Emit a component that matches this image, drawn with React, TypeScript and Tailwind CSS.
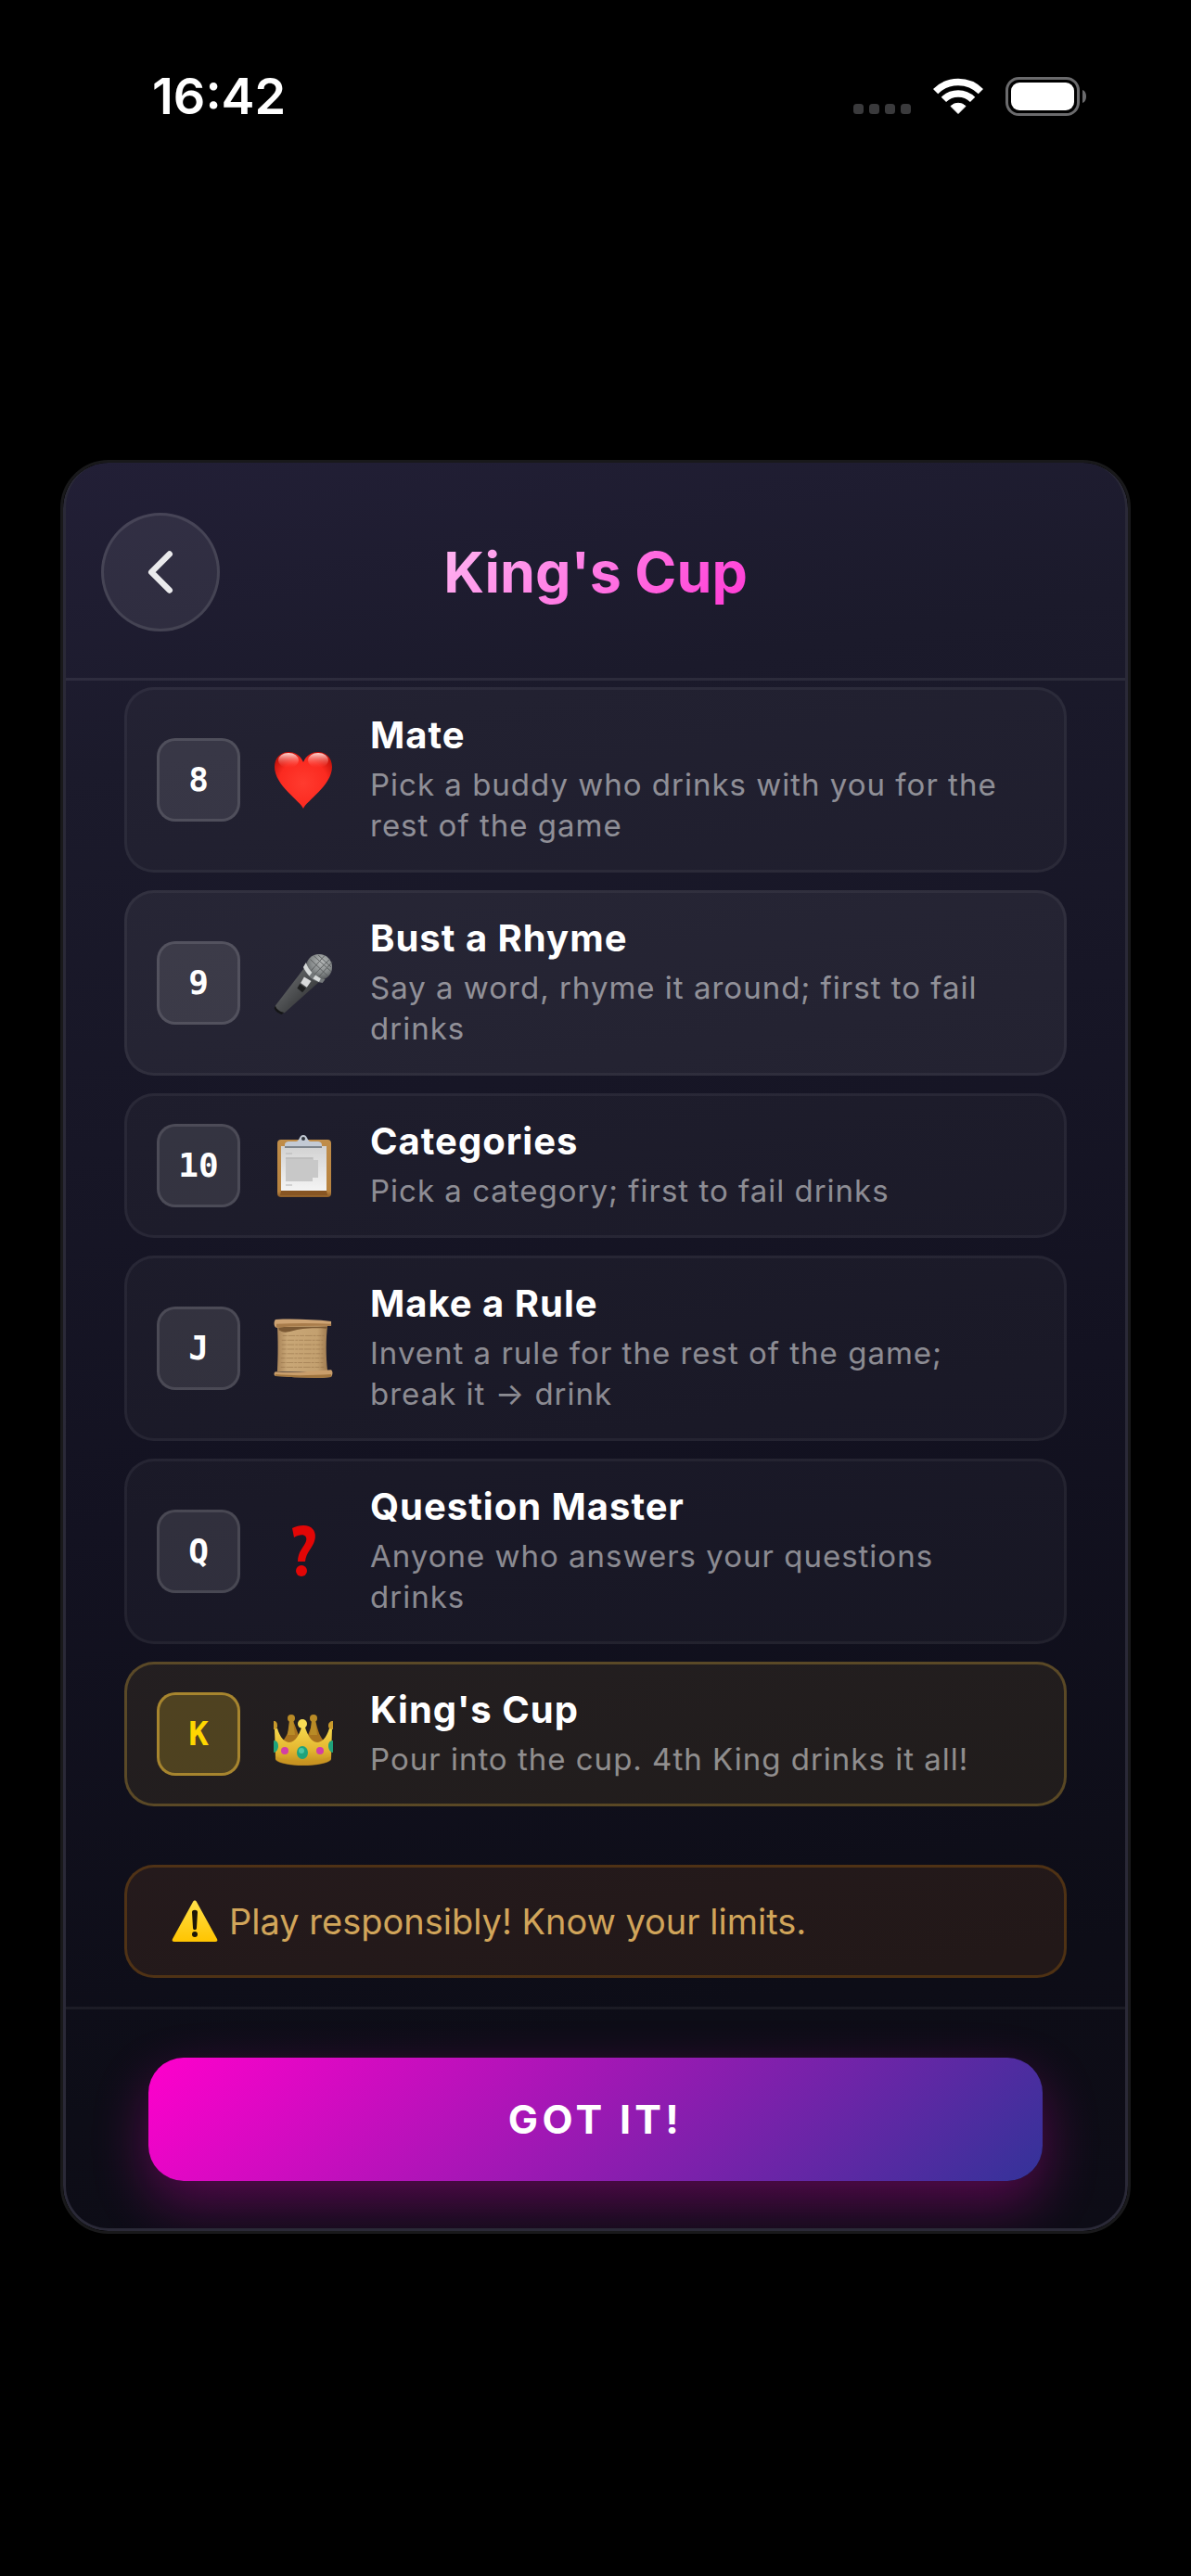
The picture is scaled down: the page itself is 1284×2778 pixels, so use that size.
import { ChevronLeft } from "lucide-react";
import clsx from "clsx";
import type { ReactNode } from "react";

type Rule = {
  card: string;
  icon: ReactNode;
  title: string;
  text: string;
  active?: boolean;
  king?: boolean;
};

function HeartIcon() {
  return (
    <svg viewBox="0 0 64 72" className="h-[72px] w-16" aria-hidden="true">
      <defs>
        <radialGradient id="heart" cx="50%" cy="55%" r="60%">
          <stop offset="0" stopColor="#ff3b2f" />
          <stop offset="0.7" stopColor="#fb2a20" />
          <stop offset="1" stopColor="#c8140c" />
        </radialGradient>
        <linearGradient id="heartShine" x1="0" y1="0" x2="0" y2="1">
          <stop offset="0" stopColor="#ffd9d4" />
          <stop offset="1" stopColor="#ff5146" stopOpacity="0" />
        </linearGradient>
      </defs>
      <path
        d="M32 67C29 59 1 42 1 22 1 12 8 6 16 6c8 0 13 4 16 11C35 10 40 6 48 6c8 0 15 6 15 16 0 20-28 37-31 45Z"
        fill="url(#heart)"
      />
      <ellipse cx="16" cy="15" rx="11" ry="8" fill="url(#heartShine)" />
      <ellipse cx="48" cy="15" rx="11" ry="8" fill="url(#heartShine)" />
    </svg>
  );
}

function MicIcon() {
  return (
    <svg viewBox="0 0 68 72" className="h-[72px] w-16" aria-hidden="true">
      <defs>
        <linearGradient id="micBody" x1="0" y1="0" x2="1" y2="1">
          <stop offset="0" stopColor="#77797b" />
          <stop offset="0.5" stopColor="#4c4e50" />
          <stop offset="1" stopColor="#202122" />
        </linearGradient>
        <radialGradient id="micHead" cx="60%" cy="30%" r="70%">
          <stop offset="0" stopColor="#b4b7b7" />
          <stop offset="0.6" stopColor="#85898a" />
          <stop offset="1" stopColor="#505355" />
        </radialGradient>
      </defs>
      <path d="M2 62 35 19c3 9 9 14 17 16L14 69c-3 3-6 2-9-1s-5-4-3-6Z" fill="url(#micBody)" />
      <path d="M2 62c1 4 5 7 10 8l-3 2c-4-1-9-5-8-8Z" fill="#141516" />
      <circle cx="52" cy="18" r="15" fill="url(#micHead)" />
      <path
        d="m42 9 20 19M46 5l20 18M51 4l15 14M45 28l19-19M42 23l17-19M50 31l17-19"
        stroke="#5a5d5e"
        strokeWidth="1"
      />
      <path d="M37 13c4 10 12 18 22 19l-3 4c-11-1-19-9-22-18Z" fill="#74787a" />
      <path d="M37 13c2 5 4 8 7 11l-3 4c-3-3-5-6-7-10ZM48 27l6 4-2 4-7-4Z" fill="#d5d8d8" />
      <path d="m35 29 8 5-5 7-7-5Z" fill="#d9dadb" />
      <path d="m30 37 7 5-4 5-6-5Z" fill="#1d1e1f" />
    </svg>
  );
}

function ClipboardIcon() {
  return (
    <svg viewBox="0 0 64 72" className="h-[72px] w-16" aria-hidden="true">
      <defs>
        <linearGradient id="board" x1="0" y1="0" x2="0" y2="1">
          <stop offset="0" stopColor="#c08d49" />
          <stop offset="0.9" stopColor="#b7823f" />
          <stop offset="1" stopColor="#8a5a26" />
        </linearGradient>
        <linearGradient id="paper" x1="0" y1="0" x2="0" y2="1">
          <stop offset="0" stopColor="#d2d2d2" />
          <stop offset="1" stopColor="#f4f4f4" />
        </linearGradient>
      </defs>
      <rect x="4" y="8" width="58" height="62" rx="4" fill="url(#board)" />
      <path d="M8 15h49v48H8Z" fill="url(#paper)" />
      <path d="M8 63h49l1 5H7Z" fill="#875523" />
      <path d="M13 27h30v3h5v19h-6v4H13Z" fill="#c8c8c8" />
      <path d="M13 23h7M13 28h29M13 57h7" stroke="#b4b4b4" strokeWidth="1" />
      <path d="M12 14c0-3 2-4 5-4h7c2 0 3-2 4-4s2-3 4-3 3 1 4 3 2 4 4 4h7c3 0 5 1 5 4v1H12Z" fill="#c3cad4" />
      <path d="M12 15h40v2H12Z" fill="#7e858d" />
      <circle cx="32" cy="7" r="2" fill="#30343c" />
    </svg>
  );
}

function ScrollIcon() {
  return (
    <svg viewBox="0 0 66 72" className="h-[72px] w-16" aria-hidden="true">
      <defs>
        <linearGradient id="parchment" x1="0" y1="0" x2="1" y2="0">
          <stop offset="0" stopColor="#a98458" />
          <stop offset="0.2" stopColor="#c9a777" />
          <stop offset="0.8" stopColor="#c3a06f" />
          <stop offset="1" stopColor="#a07b50" />
        </linearGradient>
      </defs>
      <path d="M4 10h56c-2 15-2 35 0 52H4c1-17 1-36 0-52Z" fill="url(#parchment)" />
      <path d="M5 12h55l-1 2c-18-1-28 0-39 3-7 2-11 1-14-1Z" fill="#7b5934" />
      <path d="M2 4c20-1 42 0 62 2v5c-22 0-42 0-61 2-3-1-3-7-1-9Z" fill="#cda373" />
      <path d="M3 9c20-1 41-1 61 0v2c-22 0-42 0-61 2Z" fill="#a87c4b" />
      <path
        d="M10 22h46M9 27h46M9 32h46M9 37h47M9 42h46M8 47h48M8 52h47M8 57h48"
        stroke="#8d6a42"
        strokeWidth="1"
        strokeDasharray="5 1 8 1 3 1"
        opacity="0.5"
      />
      <path d="M2 62c22 2 42-1 62-2 2 2 2 5 0 8-20 2-42 0-62-1-2-1-2-4 0-5Z" fill="#c99e6b" />
      <path d="M2 65c22 2 42 1 62 0v3c-20 2-42 0-62-1Z" fill="#a0753f" />
    </svg>
  );
}

function QuestionIcon() {
  return (
    <svg viewBox="0 0 64 72" className="h-[72px] w-16" aria-hidden="true">
      <path
        d="M20 11c6-3 13-4 18-2 7 3 8 10 6 16-2 7-9 12-10 22h-8c0-11 7-16 9-22 2-7-5-9-13-4Z"
        fill="#e20606"
      />
      <circle cx="30" cy="57" r="6" fill="#e20606" />
    </svg>
  );
}

function CrownIcon() {
  return (
    <svg viewBox="0 -5 64 72" className="h-[72px] w-16" aria-hidden="true">
      <defs>
        <linearGradient id="gold" x1="0" y1="0" x2="0" y2="1">
          <stop offset="0" stopColor="#f6d84c" />
          <stop offset="0.6" stopColor="#e3b52f" />
          <stop offset="1" stopColor="#bd8a1c" />
        </linearGradient>
      </defs>
      <path d="m18 20 2-6 10 26H8c6-5 8-12 10-20ZM46 20l-2-6-10 26h22c-6-5-8-12-10-20Z" fill="#a9731e" />
      <circle cx="19" cy="14" r="4" fill="#b98b26" />
      <circle cx="43" cy="14" r="4" fill="#b98b26" />
      <path d="M17 16h4l2 16h-8ZM41 16h4l2 16h-8Z" fill="#b98b26" />
      <path
        d="M1 25h3c3 10 8 15 13 15 7 0 11-10 13-16h4c2 6 6 16 13 16 5 0 10-5 13-15h3l-1 33c-6 9-54 9-60 0Z"
        fill="url(#gold)"
      />
      <circle cx="31" cy="20" r="5" fill="#f8dd55" />
      <path d="M0 17c3 0 4 2 4 5s-1 4-4 4ZM64 17c-3 0-5 2-5 5s2 4 5 4Z" fill="#c99a2b" />
      <path d="M2 55c14 7 46 7 60 0v4c-8 8-52 8-60 0Z" fill="#c99523" opacity="0.6" />
      <ellipse cx="31" cy="51" rx="6" ry="7" fill="#1fa37c" />
      <ellipse cx="30" cy="49" rx="3" ry="3" fill="#4cc7a2" />
      <circle cx="12" cy="49" r="4" fill="#d23ea6" />
      <circle cx="50" cy="49" r="4" fill="#d23ea6" />
      <path d="M0 38c4 0 5 3 5 6s-2 7-5 7ZM64 38c-4 0-5 3-5 6s2 7 5 7Z" fill="#1fa37c" />
    </svg>
  );
}

function WarningIcon() {
  return (
    <svg viewBox="0 0 50 46" className="h-[46px] w-[50px]" aria-hidden="true">
      <defs>
        <linearGradient id="warn" x1="0" y1="0" x2="0" y2="1">
          <stop offset="0" stopColor="#ffe14a" />
          <stop offset="1" stopColor="#ffc400" />
        </linearGradient>
      </defs>
      <path d="M23 2c1-2 3-2 4 0l22 40c1 2 0 3-2 3H3c-2 0-3-1-2-3Z" fill="url(#warn)" />
      <path d="M22 13c0-3 6-3 6 0l-1 17c0 3-4 3-4 0Z" fill="#1c1708" />
      <circle cx="25" cy="37" r="3" fill="#1c1708" />
    </svg>
  );
}

const RULES: Rule[] = [
  { card: "8", icon: <HeartIcon />, title: "Mate", text: "Pick a buddy who drinks with you for the rest of the game" },
  {
    card: "9",
    icon: <MicIcon />,
    title: "Bust a Rhyme",
    text: "Say a word, rhyme it around; first to fail drinks",
    active: true,
  },
  { card: "10", icon: <ClipboardIcon />, title: "Categories", text: "Pick a category; first to fail drinks" },
  {
    card: "J",
    icon: <ScrollIcon />,
    title: "Make a Rule",
    text: "Invent a rule for the rest of the game; break it → drink",
  },
  { card: "Q", icon: <QuestionIcon />, title: "Question Master", text: "Anyone who answers your questions drinks" },
  {
    card: "K",
    icon: <CrownIcon />,
    title: "King's Cup",
    text: "Pour into the cup. 4th King drinks it all!",
    king: true,
  },
];

function StatusBar() {
  return (
    <div className="flex h-[208px] items-center justify-between pr-28 pl-[164px]">
      <span className="text-[54px] leading-none font-semibold text-white">16:42</span>
      <div className="flex items-center gap-6">
        <svg viewBox="0 0 62 40" className="h-10 w-[62px]" fill="#3a3a3c" aria-hidden="true">
          <rect x="0" y="28" width="11" height="11" rx="3.5" />
          <rect x="17" y="28" width="11" height="11" rx="3.5" />
          <rect x="34" y="28" width="11" height="11" rx="3.5" />
          <rect x="51" y="28" width="11" height="11" rx="3.5" />
        </svg>
        <svg viewBox="0 0 54 40" className="h-10 w-[54px]" fill="none" stroke="#fff" strokeWidth="7.5" aria-hidden="true">
          <path d="M2.6 14.6a34.5 34.5 0 0 1 48.8 0" />
          <path d="M11.4 23.4a22 22 0 0 1 31.2 0" />
          <path d="m27 38.5-8-8a11.5 11.5 0 0 1 16 0Z" fill="#fff" strokeWidth="1" strokeLinejoin="round" />
        </svg>
        <svg viewBox="0 0 88 42" className="h-[42px] w-[88px]" aria-hidden="true">
          <rect x="1.5" y="1.5" width="77" height="39" rx="13" fill="none" stroke="#6b6b6d" strokeWidth="3" />
          <rect x="6" y="6" width="68" height="30" rx="9" fill="#fff" />
          <path d="M83 14c3 1 4 4 4 7s-1 6-4 7Z" fill="#6b6b6d" />
        </svg>
      </div>
    </div>
  );
}

function RuleRow({ rule }: { rule: Rule }) {
  return (
    <li
      className={clsx(
        "flex items-center gap-9 rounded-[32px] border-3 px-8 py-[26px]",
        rule.king && "border-[#ffc83c]/25 bg-[#ffc83c]/8",
        !rule.king && "border-white/5",
        !rule.king && (rule.active ? "bg-white/6" : "bg-white/3"),
      )}
    >
      <span
        className={clsx(
          "flex size-[90px] shrink-0 items-center justify-center rounded-[20px] border-3 font-['DejaVu_Sans_Mono',monospace] text-[36px] leading-none font-bold",
          rule.king ? "border-[#ffc83c]/50 bg-[#ffd028]/20 text-[#ffd700]" : "border-white/12 bg-white/10 text-white",
        )}
      >
        {rule.card}
      </span>
      <span className="shrink-0">{rule.icon}</span>
      <div className="min-w-0 flex-1 pr-4 pl-1">
        <h2 className="mb-2 text-[40px] leading-[46px] font-bold tracking-[1px] text-white">{rule.title}</h2>
        <p className="text-[33px] leading-[44px] tracking-[1px] text-white/50">{rule.text}</p>
      </div>
    </li>
  );
}

export default function App() {
  return (
    <div className="min-h-screen bg-black pb-[369px] font-[Inter,'Noto_Sans',sans-serif]">
      <StatusBar />
      <main className="mx-[65px] mt-72 overflow-hidden rounded-[52px] border-3 border-[#19191b]">
        <div className="rounded-[49px] border-x-3 border-b-3 border-[#2a2937] bg-[linear-gradient(170deg,#221f36_0%,#1b1a2b_16%,#131221_55%,#0d0d17_85%,#0d0c16_100%)]">
          <header className="grid grid-cols-[128px_1fr_128px] items-center border-b-3 border-white/8 px-[38px] pt-[54px] pb-[50px]">
            <button
              type="button"
              aria-label="Back"
              className="flex size-32 items-center justify-center rounded-full border-3 border-white/10 bg-white/8 text-white/90"
            >
              <ChevronLeft className="size-[78px]" strokeWidth={2} />
            </button>
            <h1 className="justify-self-center bg-[linear-gradient(135deg,#ffb8f2,#ff38d5)] bg-clip-text text-[61px] leading-[80px] font-bold text-transparent">
              King's Cup
            </h1>
          </header>

          <div className="px-[63px] pt-[7px] pb-[31px]">
            <ul className="flex flex-col gap-[19px]">
              {RULES.map((rule) => (
                <RuleRow key={rule.card} rule={rule} />
              ))}
            </ul>
            <p className="mt-[63px] flex items-center gap-3 rounded-[32px] border-3 border-[#ff9500]/20 bg-[#ff8c28]/9 px-12 py-[34px] text-[38px] leading-[48px] text-[#d1a55a]">
              <WarningIcon />
              Play responsibly! Know your limits.
            </p>
          </div>

          <footer className="overflow-hidden rounded-b-[46px] border-t-3 border-white/6 px-[89px] pt-[52px] pb-[51px]">
            <button
              type="button"
              className="h-[133px] w-full rounded-[38px] bg-[linear-gradient(135deg,#ff00cc,#333399)] text-[43px] font-bold tracking-widest text-white shadow-[0_24px_60px_rgba(255,0,204,0.3)]"
            >
              GOT IT!
            </button>
          </footer>
        </div>
      </main>
    </div>
  );
}
